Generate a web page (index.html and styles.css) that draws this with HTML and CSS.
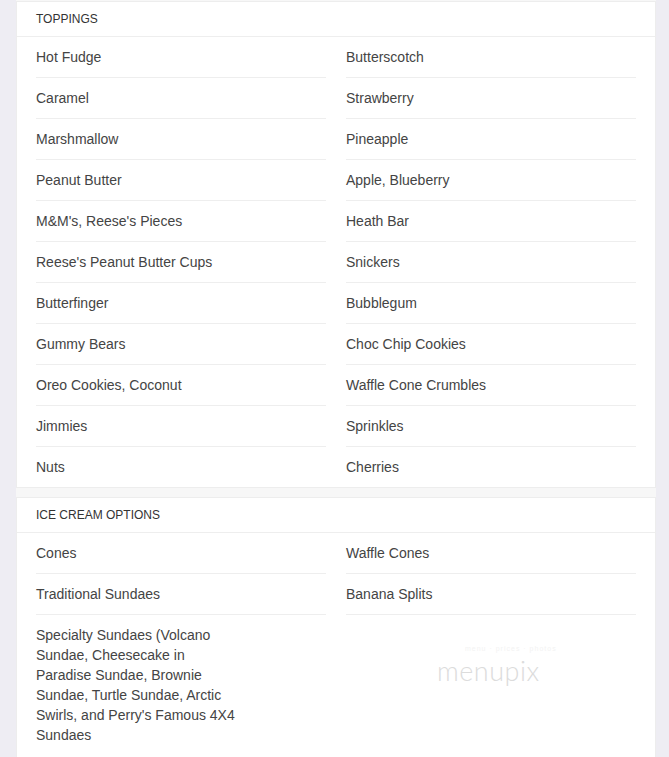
FILE: index.html
```html
<!DOCTYPE html>
<html lang="en">
<head>
<meta charset="utf-8">
<title>Menu</title>
<link rel="stylesheet" href="styles.css">
</head>
<body>
<div class="page">
  <section class="card">
    <div class="card-head">Toppings</div>
    <div class="grid">
      <div class="item">Hot Fudge</div>
      <div class="item">Butterscotch</div>
      <div class="item">Caramel</div>
      <div class="item">Strawberry</div>
      <div class="item">Marshmallow</div>
      <div class="item">Pineapple</div>
      <div class="item">Peanut Butter</div>
      <div class="item">Apple, Blueberry</div>
      <div class="item">M&amp;M's, Reese's Pieces</div>
      <div class="item">Heath Bar</div>
      <div class="item">Reese's Peanut Butter Cups</div>
      <div class="item">Snickers</div>
      <div class="item">Butterfinger</div>
      <div class="item">Bubblegum</div>
      <div class="item">Gummy Bears</div>
      <div class="item">Choc Chip Cookies</div>
      <div class="item">Oreo Cookies, Coconut</div>
      <div class="item">Waffle Cone Crumbles</div>
      <div class="item">Jimmies</div>
      <div class="item">Sprinkles</div>
      <div class="item last">Nuts</div>
      <div class="item last">Cherries</div>
    </div>
  </section>
  <section class="card card-rel">
    <div class="card-head">Ice Cream Options</div>
    <div class="grid">
      <div class="item">Cones</div>
      <div class="item">Waffle Cones</div>
      <div class="item">Traditional Sundaes</div>
      <div class="item">Banana Splits</div>
      <div class="item last"><span class="narrow">Specialty Sundaes (Volcano Sundae, Cheesecake in Paradise Sundae, Brownie Sundae, Turtle Sundae, Arctic Swirls, and Perry's Famous 4X4 Sundaes</span></div>
      <div class="item last"></div>
    </div>
    <div class="watermark">
      <div class="wm-small">menu &middot; prices &middot; photos</div>
      <div class="wm-logo">menupix</div>
    </div>
  </section>
</div>
</body>
</html>
```
FILE: styles.css
```css
html, body {
  margin: 0;
  padding: 0;
}
body {
  background: #eeedf3;
  font-family: "Liberation Sans", Arial, sans-serif;
  color: #444;
}
.page {
  width: 640px;
  margin-left: 16px;
  background: #f7f7f7;
  padding-top: 1px;
  display: flex;
  flex-direction: column;
  gap: 9px;
  min-height: 757px;
  box-sizing: border-box;
}
.card {
  background: #fff;
  border: 1px solid #ededed;
}
.card-rel {
  position: relative;
  padding-bottom: 6px;
}
.card-head {
  padding: 10px 19px;
  font-size: 12px;
  line-height: 14px;
  color: #333;
  text-transform: uppercase;
  border-bottom: 1px solid #eeeeee;
}
.grid {
  display: grid;
  grid-template-columns: 290px 290px;
  column-gap: 20px;
  padding: 0 19px;
}
.item {
  padding: 10px 0;
  font-size: 14px;
  line-height: 20px;
  color: #444;
  border-bottom: 1px solid #eeeeee;
}
.item.last {
  border-bottom: none;
}
.narrow {
  display: block;
  max-width: 205px;
}
.watermark {
  position: absolute;
  left: 420px;
  top: 146px;
  width: 140px;
  pointer-events: none;
}
.wm-small {
  font-size: 7px;
  line-height: 10px;
  color: #f3f3f3;
  letter-spacing: 1px;
  margin-left: 28px;
}
.wm-logo {
  font-family: "Lato", "Liberation Sans", sans-serif;
  font-weight: 300;
  font-size: 27px;
  line-height: 34px;
  color: #dcdcdc;
  letter-spacing: 0.5px;
}
```
